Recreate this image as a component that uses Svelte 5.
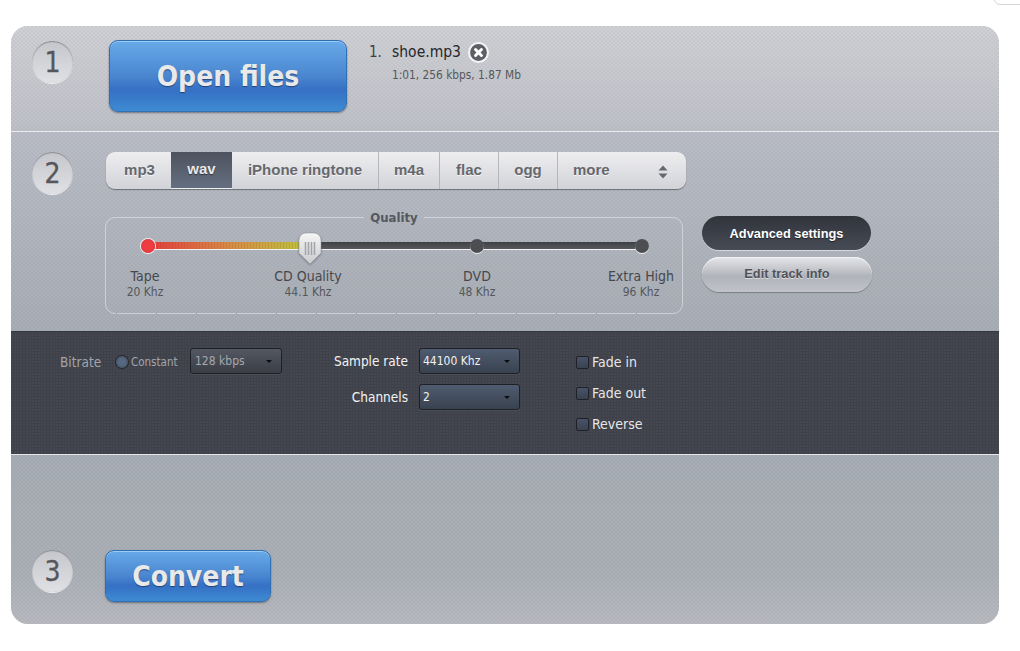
<script>
  const tabs = [
    { label: 'mp3', width: 65 },
    { label: 'wav', width: 61, active: true },
    { label: 'iPhone ringtone', width: 146 },
    { label: 'm4a', width: 61 },
    { label: 'flac', width: 59 },
    { label: 'ogg', width: 59 }
  ];

  const marks = [
    { name: 'Tape', freq: '20 Khz' },
    { name: 'CD Quality', freq: '44.1 Khz' },
    { name: 'DVD', freq: '48 Khz' },
    { name: 'Extra High', freq: '96 Khz' }
  ];

  const effects = ['Fade in', 'Fade out', 'Reverse'];
</script>

<div class="corner"></div>

<main class="panel">
  <section class="step-open">
    <div class="num first">1</div>
    <button class="blue open">Open files</button>
    <div class="file">
      <div class="file-name">
        <span class="idx">1.</span>
        <span>shoe.mp3</span>
        <span class="remove">
          <svg width="21" height="21" viewBox="0 0 20 20">
            <circle cx="10" cy="10" r="9" fill="#5e6066" stroke="#f4f4f5" stroke-width="2" />
            <path d="M7.200 7.200l5.600 5.600M12.800 7.200l-5.600 5.600" stroke="#fff" stroke-width="2.800" stroke-linecap="round" />
          </svg>
        </span>
      </div>
      <div class="file-meta">1:01, 256 kbps, 1.87 Mb</div>
    </div>
  </section>

  <section class="step-format">
    <div class="num">2</div>
    <div class="format-body">
      <div class="tabs">
        {#each tabs as tab}
          <div class="tab" class:active={tab.active} style="width: {tab.width}px">{tab.label}</div>
        {/each}
        <div class="tab more">
          <span>more</span>
          <svg width="12" height="16" viewBox="0 0 12 16">
            <path d="M6 1.500l4.500 5h-9zM6 14.500l-4.500-5h9z" fill="#66686e" />
          </svg>
        </div>
      </div>

      <div class="quality-row">
        <fieldset class="quality">
          <legend>Quality</legend>
          <div class="track">
            <div class="fill"></div>
            <span class="stop red"></span>
            <span class="stop"></span>
            <span class="stop"></span>
            <span class="stop"></span>
            <svg class="thumb" width="24" height="34" viewBox="0 0 24 34">
              <defs>
                <linearGradient id="thumb-bg" x1="0" y1="0" x2="0" y2="1">
                  <stop offset="0" stop-color="#f6f6f6" />
                  <stop offset="1" stop-color="#c9cbce" />
                </linearGradient>
              </defs>
              <path d="M1 8a7 7 0 0 1 7-7h8a7 7 0 0 1 7 7v13l-11 11-11-11z" fill="url(#thumb-bg)" stroke="#8f9298" stroke-width="0.5" />
              <path d="M7.500 10v13M10.500 10v13M13.500 10v13M16.500 10v13" stroke="#a2a4a8" stroke-width="1.500" />
            </svg>
          </div>
          <div class="marks">
            {#each marks as mark}
              <div class="mark">
                <div class="mark-name">{mark.name}</div>
                <div class="mark-freq">{mark.freq}</div>
              </div>
            {/each}
          </div>
        </fieldset>

        <div class="side-buttons">
          <button class="pill dark">Advanced settings</button>
          <button class="pill light">Edit track info</button>
        </div>
      </div>
    </div>
  </section>

  <section class="advanced">
    <div class="bitrate">
      <span class="dim-label">Bitrate</span>
      <span class="radio"></span>
      <span class="constant">Constant</span>
      <div class="select muted"><span>128 kbps</span><i></i></div>
    </div>
    <div class="fields">
      <div class="field">
        <span class="field-label">Sample rate</span>
        <div class="select"><span>44100 Khz</span><i></i></div>
      </div>
      <div class="field">
        <span class="field-label">Channels</span>
        <div class="select"><span>2</span><i></i></div>
      </div>
    </div>
    <div class="checks">
      {#each effects as effect}
        <div class="check"><span class="box"></span>{effect}</div>
      {/each}
    </div>
  </section>

  <section class="step-convert">
    <div class="num">3</div>
    <button class="blue convert">Convert</button>
  </section>
</main>

<style>
  :global(body) {
    background: #fff;
    font-family: "DejaVu Sans Condensed", "DejaVu Sans", sans-serif;
  }

  .corner {
    position: absolute;
    top: -8px;
    left: 994px;
    width: 40px;
    height: 11px;
    border: 1px solid #d4d6da;
    border-radius: 6px;
  }

  .panel {
    box-sizing: border-box;
    width: 988px;
    height: 598px;
    margin: 26px 0 0 11px;
    border-radius: 17px;
    overflow: hidden;
    display: flex;
    flex-direction: column;
    box-shadow: inset 0 0 0 1px rgba(130, 134, 142, 0.35);
  }

  section {
    box-sizing: border-box;
    flex: none;
  }

  .step-open,
  .step-format,
  .step-convert {
    --dots: radial-gradient(circle at 1px 1px, rgba(90, 95, 105, 0.07) 0.9px, transparent 1.1px) 0 0 / 4px 4px,
      radial-gradient(circle at 1px 1px, rgba(90, 95, 105, 0.07) 0.9px, transparent 1.1px) 2px 2px / 4px 4px;
  }

  .step-open {
    height: 105px;
    padding: 14px 0 0 21px;
    display: flex;
    background: var(--dots), linear-gradient(#cfd1d5, #bfc1c7);
  }

  .step-format {
    height: 200px;
    padding: 20px 0 0 21px;
    display: flex;
    border-top: 1px solid #e8eaec;
    background: var(--dots), linear-gradient(#babdc6, #a8aeb5);
  }

  .step-convert {
    flex: 1;
    padding: 95px 0 0 21px;
    display: flex;
    border-top: 1px solid #e6e8ea;
    background: var(--dots), linear-gradient(#a7adb4, #abb0b7 70%, #b8babf);
  }

  .num {
    width: 41px;
    height: 42px;
    flex: none;
    border-radius: 50%;
    display: flex;
    align-items: center;
    justify-content: center;
    background: linear-gradient(#c4c6cb, #e0e1e4);
    box-shadow: inset 0 1px 1px rgba(90, 92, 98, 0.55), 0 1px 0 #eceded;
    color: #55575c;
    font-size: 28px;
    line-height: 1;
    padding-top: 2px;
    box-sizing: border-box;
    -webkit-text-stroke: 0.3px #55575c;
  }

  .num.first {
    margin-top: 1px;
  }

  .blue {
    border: 1px solid #2f6fb4;
    border-radius: 9px;
    color: #e9e9ea;
    font-family: inherit;
    font-weight: bold;
    text-shadow: 0 1px 1px rgba(30, 50, 90, 0.75);
    background: linear-gradient(#67a9e8, #4a86d0 50%, #3570c4 70%, #3e8bd2);
    box-shadow: inset 0 1px 0 #9accf5, 0 1px 2px rgba(50, 55, 70, 0.55);
    padding: 0;
  }

  .open {
    width: 238px;
    height: 72px;
    margin-left: 36px;
    font-size: 28px;
  }

  .convert {
    width: 166px;
    height: 52px;
    margin-left: 32px;
    font-size: 28px;
  }

  .file {
    margin-left: 22px;
    padding-top: 1px;
    color: #26272a;
  }

  .file-name {
    display: flex;
    align-items: center;
    font-size: 15.500px;
    height: 22px;
  }

  .idx {
    width: 23px;
    color: #3e4044;
    font-size: 15px;
  }

  .remove {
    display: flex;
    margin-left: 7px;
  }

  .file-meta {
    margin: 5px 0 0 23px;
    font-size: 11.800px;
    color: #55575c;
  }

  .format-body {
    margin-left: 33px;
  }

  .tabs {
    display: flex;
    width: 580px;
    height: 37px;
    box-sizing: border-box;
    border-radius: 9px;
    overflow: hidden;
    box-shadow: 0 1px 1px #6c6f76;
    background: linear-gradient(#eeeef0, #d2d3d8);
    font-family: "Liberation Sans", Arial, sans-serif;
    font-weight: bold;
    font-size: 15px;
    color: #66686d;
  }

  .tab {
    box-sizing: border-box;
    display: flex;
    align-items: center;
    justify-content: center;
    padding-bottom: 3px;
    border-left: 1px solid #b4b6bb;
    text-shadow: 0 1px 0 #f5f5f6;
  }

  .tab:first-child {
    border-left: 0;
    padding-left: 2px;
  }

  .tab.active {
    background: linear-gradient(#4d525e, #656f80);
    color: #e8e9eb;
    border: 0;
    border-bottom: 1px solid #eef0f2;
    text-shadow: 0 1px 1px #30333a;
  }

  .tab.active + .tab {
    border-left: 0;
  }

  .tab.more {
    flex: 1;
    justify-content: space-between;
    padding: 0 17px 3px 15px;
  }

  .tab.more svg {
    margin-top: 5px;
  }

  .quality-row {
    display: flex;
    margin-top: 19px;
  }

  .quality {
    position: relative;
    box-sizing: border-box;
    width: 578px;
    height: 106px;
    margin: 0 0 0 -1px;
    padding: 0;
    min-width: 0;
    border: 1px solid rgba(225, 228, 232, 0.65);
    border-radius: 10px;
  }

  .quality::after {
    content: "";
    position: absolute;
    left: 10px;
    right: 10px;
    bottom: -1px;
    height: 1px;
    background: repeating-linear-gradient(90deg, rgba(120, 125, 135, 0.7) 0 1px, transparent 1px 40px);
  }

  legend {
    margin: 0 auto;
    padding: 2px 6px 0;
    font-size: 13px;
    font-weight: bold;
    color: #55585e;
    line-height: 16px;
  }

  .track {
    position: relative;
    height: 7px;
    margin: 16px 40px 0 42px;
    display: flex;
    align-items: center;
    justify-content: space-between;
    background: linear-gradient(#404144, #57585b);
    box-shadow: 0 1px 0 #f1f2f3;
  }

  .fill {
    position: absolute;
    left: 0;
    top: 0;
    width: 162px;
    height: 100%;
    background: repeating-linear-gradient(90deg, rgba(70, 60, 40, 0.12) 0 1px, transparent 1px 3px),
      linear-gradient(90deg, #e43b3b, #d98a45 50%, #bcc63c);
  }

  .stop {
    position: relative;
    width: 14px;
    height: 14px;
    box-sizing: border-box;
    border-radius: 50%;
    background: #4d4e51;
    box-shadow: 0 1px 0 #eceef0;
    margin: 0 -7px;
  }

  .stop.red {
    background: radial-gradient(circle, #ee3d40 50%, #c93336);
    box-shadow: 0 0 0 1px #eceef0;
  }

  .thumb {
    position: absolute;
    left: 150px;
    top: -10px;
    filter: drop-shadow(0 1px 1px rgba(60, 62, 68, 0.45));
  }

  .marks {
    display: grid;
    grid-template-columns: 163px 169px 164px 80px;
    margin: 19px 0 0 -1px;
  }

  .mark {
    width: 80px;
    text-align: center;
    color: #46484d;
  }

  .mark-name {
    font-size: 14px;
    line-height: 17px;
  }

  .mark-freq {
    font-size: 12px;
    line-height: 15px;
    color: #55575c;
  }

  .side-buttons {
    margin: 8px 0 0 19px;
    display: flex;
    flex-direction: column;
    gap: 7px;
  }

  .pill {
    width: 169px;
    height: 34px;
    padding: 0;
    border-radius: 18px;
    border: 0;
    font-family: "Liberation Sans", Arial, sans-serif;
    font-size: 12.800px;
    font-weight: bold;
  }

  .pill.dark {
    background: linear-gradient(#31343b, #474b55);
    color: #fff;
    box-shadow: 0 1px 0 #d5d8dc;
    text-shadow: 0 1px 1px #1f2126;
  }

  .pill.light {
    width: 170px;
    height: 35px;
    padding-bottom: 2px;
    background: linear-gradient(#e6e7e9, #b0b3ba 55%, #c0c3c9);
    color: #505257;
    box-shadow: inset 0 1px 0 #f3f4f5, 0 1px 1px #7a7d84;
    text-shadow: 0 1px 0 #dcdde0;
  }

  .advanced {
    height: 123px;
    padding: 17px 0 0 49px;
    display: flex;
    align-items: flex-start;
    background: radial-gradient(circle at 1px 1px, rgba(255, 255, 255, 0.03) 0.9px, transparent 1.1px) 0 0 / 3px 3px, #3e4149;
    box-shadow: inset 0 1px 0 #33363d;
  }

  .bitrate {
    display: flex;
    align-items: center;
    height: 26px;
    width: 269px;
    font-size: 13px;
    color: #a3a5aa;
  }

  .dim-label {
    font-size: 13.500px;
    width: 55px;
    flex: none;
    padding-top: 1px;
  }

  .radio {
    width: 12px;
    height: 12px;
    margin: 1px 0 0 1px;
    flex: none;
    border-radius: 50%;
    background: radial-gradient(circle, #566781 40%, #39424f);
    box-shadow: 0 0 0 1px #26282e;
  }

  .constant {
    margin-left: 3px;
    width: 59px;
    flex: none;
    font-size: 11.500px;
    padding-top: 1px;
  }

  .select {
    box-sizing: border-box;
    height: 26px;
    width: 101px;
    padding: 0 9px 0 3px;
    display: flex;
    align-items: center;
    justify-content: space-between;
    border: 1px solid #1e2025;
    border-radius: 3px;
    background: linear-gradient(#4f5b70, #39424f);
    box-shadow: 0 1px 0 #4d5058;
    color: #f0f1f2;
    font-size: 12px;
  }

  .select i {
    border: 3px solid transparent;
    border-top: 3px solid #0d0e10;
    border-bottom: 0;
  }

  .select.muted {
    width: 92px;
    padding-left: 4px;
    background: linear-gradient(#545862, #3a3d46);
    color: #a6a8ad;
  }

  .fields {
    width: 248px;
    display: flex;
    flex-direction: column;
    gap: 10px;
  }

  .field {
    display: flex;
    align-items: center;
    justify-content: flex-end;
    gap: 11px;
    width: 191px;
    font-size: 13.500px;
    color: #f2f3f4;
  }

  .checks {
    display: flex;
    flex-direction: column;
    gap: 9px;
    padding-top: 3px;
    margin-left: -1px;
  }

  .check {
    display: flex;
    align-items: center;
    gap: 3px;
    height: 22px;
    font-size: 14px;
    color: #e6e7e9;
  }

  .box {
    width: 11px;
    height: 11px;
    border-radius: 2px;
    background: linear-gradient(#47536a, #39424f);
    border: 1px solid #1f2126;
  }
</style>
